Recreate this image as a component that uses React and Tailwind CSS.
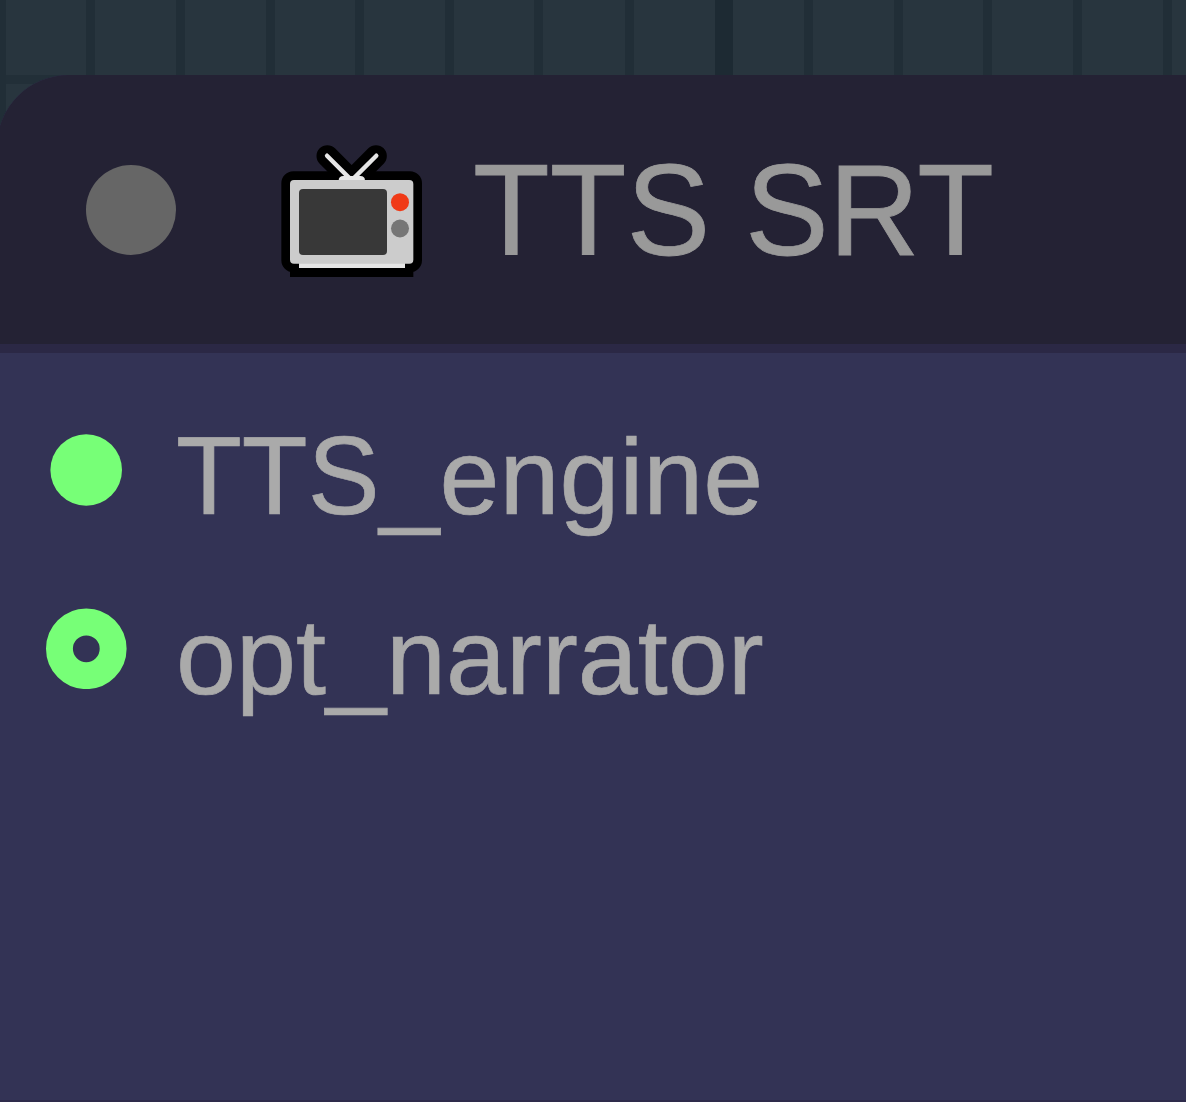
const columns = [
  [0, 6, false], [86, 9, false], [176, 9, false], [266, 9, false], [355, 9, false],
  [445, 9, false], [534, 9, false], [625, 9, false], [715, 18, true], [804, 9, false],
  [894, 9, false], [983, 9, false], [1073, 9, false], [1163, 9, false],
];

function CanvasGrid() {
  return (
    <div className="col-start-1 row-start-1 flex h-[150px] flex-col bg-[#28353e]">
      <div className="grid h-full grid-cols-1 grid-rows-1">
        <div className="col-start-1 row-start-1 mt-[75px] h-[9px] bg-[#222f38]" />
        {columns.map(([x, width, major]) => (
          <div
            key={x}
            className={`col-start-1 row-start-1 h-full ${major ? "bg-[#1d2a33]" : "bg-[#212e37]"}`}
            style={{ marginLeft: x, width }}
          />
        ))}
      </div>
    </div>
  );
}

function TvIcon() {
  return (
    <svg viewBox="0 0 495 465" className="h-[155px] w-[165px] shrink-0" aria-label="TV">
      <g stroke="#000" strokeLinecap="round" strokeLinejoin="round" fill="none">
        <path d="M172 63L245 136L318 63" strokeWidth="65" />
        <rect x="60" y="135" width="370" height="251" rx="10" strokeWidth="52" fill="#000" />
      </g>
      <path d="M60 385H430V426H60Z" fill="#000" />
      <path d="M171 62L245 136L319 62" fill="none" stroke="#e6e6e6" strokeWidth="13" strokeLinecap="round" />
      <path d="M206 137Q206 123 220 123H271Q285 123 285 137Z" fill="#e6e6e6" />
      <path d="M87 382H405V399H87Z" fill="#e6e6e6" />
      <rect x="60" y="135" width="370" height="251" rx="12" fill="#ccc" />
      <rect x="87" y="162" width="264" height="198" rx="12" fill="#383838" />
      <circle cx="390" cy="201.5" r="27" fill="#f03a17" />
      <circle cx="390" cy="280.5" r="27" fill="#767676" />
    </svg>
  );
}

export default function App() {
  return (
    <main className="grid h-[1102px] w-[1186px] grid-cols-1 grid-rows-1 overflow-hidden bg-[#333355] font-['Liberation_Sans',Arial,sans-serif]">
      <CanvasGrid />
      <section className="relative col-start-1 row-start-1 -ml-[3px] mt-[75px] flex h-[1027px] flex-col overflow-hidden rounded-tl-[71.6px] border-b-2 border-[#2e2b4b] bg-[#333355]">
        <header className="flex h-[278px] shrink-0 items-start border-b-[9px] border-[#2b2845] bg-[#242234]">
          <span className="ml-[89px] mt-[90px] size-[90px] shrink-0 rounded-full bg-[#666]" />
          <div className="ml-[94px] mt-[60px]"><TvIcon /></div>
          <h1 className="ml-[38px] mt-[65px] origin-[0_115px] scale-y-[1.03] whitespace-pre text-[125.6px] leading-[144px] text-[#999] [-webkit-text-stroke:0.8px_#999]">TTS SRT</h1>
        </header>
        <div className="flex h-[180px] shrink-0 items-start text-[#aaa]">
          <svg viewBox="0 0 72 72" className="ml-[53px] mt-[80.5px] size-[72px] shrink-0"><circle cx="36.2" cy="36" r="35.8" fill="#77ff77" /></svg>
          <span className="ml-[54px] mt-[62px] text-[107.8px] leading-[124px] [-webkit-text-stroke:0.7px_#aaa]">
            <span className="inline-block origin-[0_99px] scale-y-[1.04]">TTS</span>_engine
          </span>
        </div>
        <div className="flex h-[180px] shrink-0 items-start text-[#aaa]">
          <svg viewBox="0 0 81 81" className="ml-[49px] mt-[75px] size-[81px] shrink-0"><circle cx="40.3" cy="40.8" r="26.85" fill="none" stroke="#77ff77" strokeWidth="26.9" /></svg>
          <span className="ml-[49px] mt-[62px] text-[107.9px] leading-[124px] [-webkit-text-stroke:0.7px_#aaa]">opt_narrator</span>
        </div>
      </section>
    </main>
  );
}
